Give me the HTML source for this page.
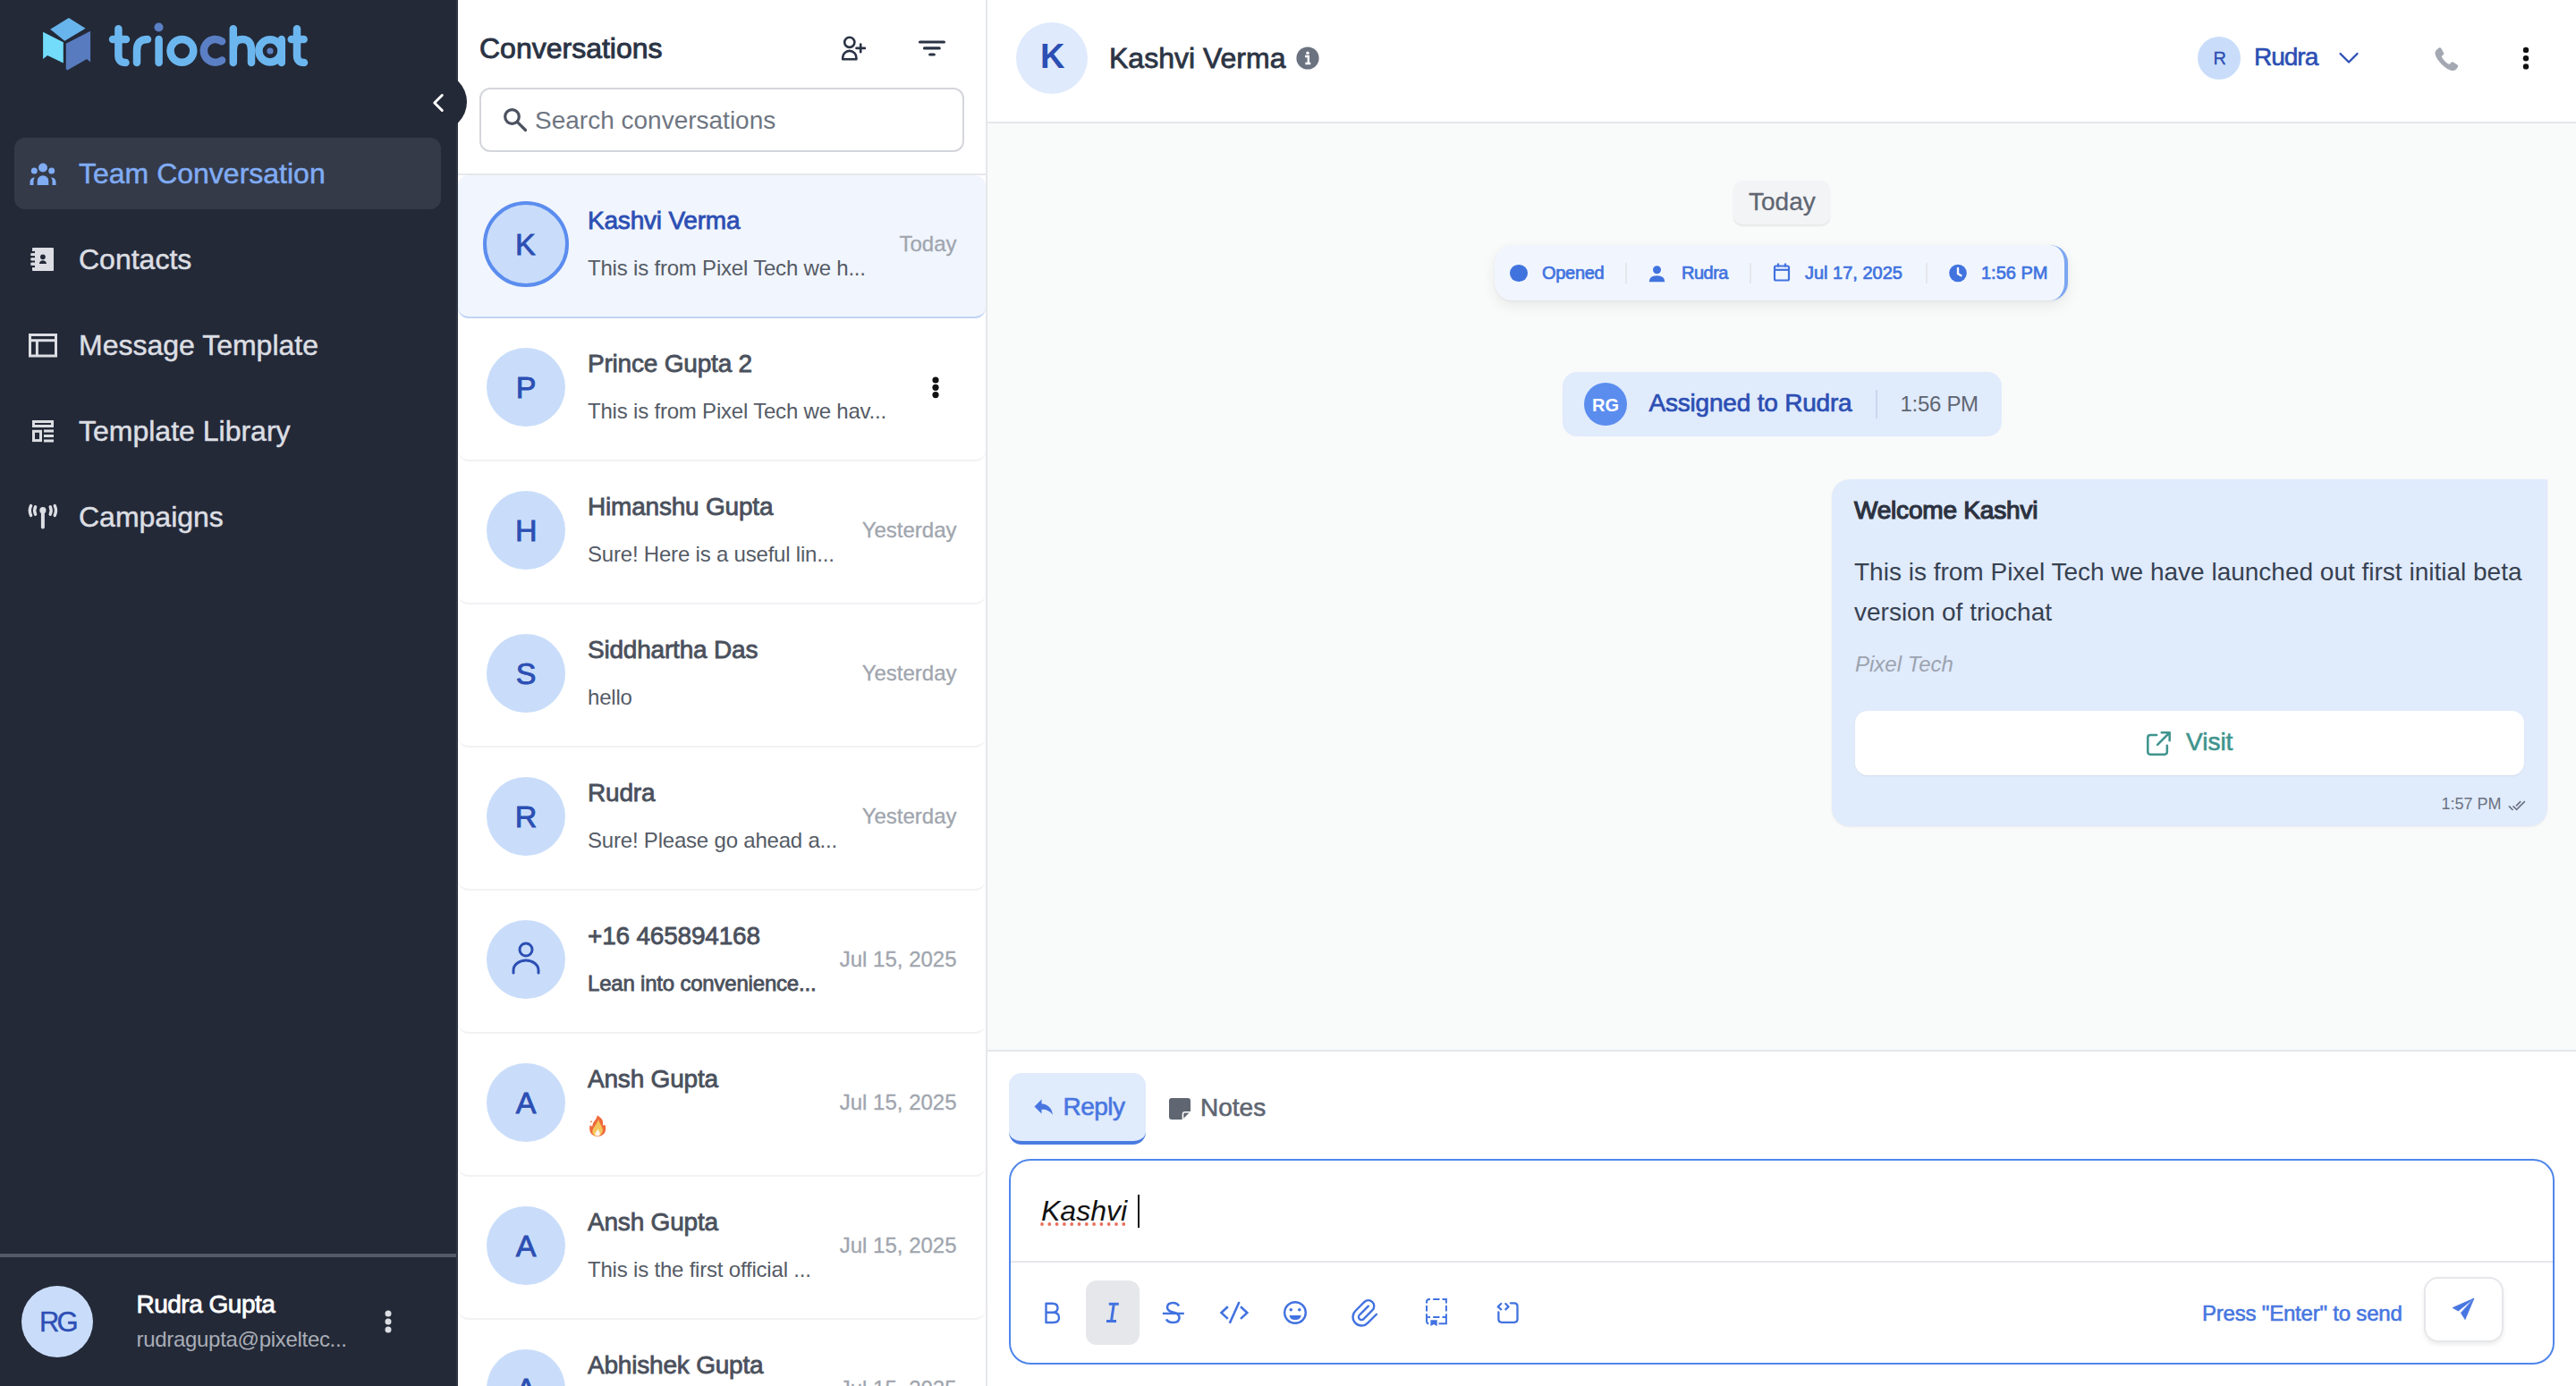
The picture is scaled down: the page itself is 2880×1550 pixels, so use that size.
<!DOCTYPE html>
<html><head><meta charset="utf-8"><title>triochat</title>
<style>
html,body{margin:0;padding:0;width:2880px;height:1550px;overflow:hidden;background:#fff;font-family:"Liberation Sans", sans-serif;}
.b{position:absolute;}
.t{position:absolute;white-space:nowrap;line-height:1;}
</style></head><body>
<div class="b" style="left:0px;top:0px;width:512px;height:1550px;background:#232937;"></div><div class="b" style="left:510px;top:0px;width:2px;height:1550px;background:#2f3644;"></div><svg class="b" style="left:40px;top:14px;" width="70" height="70" viewBox="0 0 70 70">
<polygon fill="#68b4ec" points="36.9,6.1 55.6,17.7 32.3,31.8 16.2,18.7"/>
<polygon fill="#72dcfa" points="8.1,21.7 30.8,33.3 30.8,56.6 13.1,48 8.1,52"/>
<polygon fill="#587bbf" points="33.8,34.8 61.1,20.7 61.1,55.6 57.1,52 35.4,64.6 33.8,63.6"/>
</svg><svg class="b" style="left:0px;top:0px;" width="400" height="100" viewBox="0 0 400 100">
<g fill="none" stroke="#6cb6ef" stroke-width="8.5" stroke-linecap="round" stroke-linejoin="round">
<path d="M132.4,32.3 V62 Q132.4,70 140.5,70"/>
<path d="M126,44 H141"/>
<path d="M153,70 V56 Q153,44 165,44"/>
<path d="M177.6,44 V70"/>
<circle cx="203.4" cy="56.8" r="12.9"/>
<path d="M260.8,32.3 V70 M260.8,56 Q260.8,44 271,44 Q281,44 281,56 V70"/>
<circle cx="302" cy="56.8" r="12.6"/>
<path d="M314.8,44 V70"/>
<path d="M332,32.3 V62 Q332,70 340,70"/>
<path d="M325.7,44 H339.7"/>
</g>
<path d="M248.1,46.2 A12.9,12.9 0 1 0 248.1,67.4" fill="none" stroke="#5b7fc4" stroke-width="8.5" stroke-linecap="round"/>
<circle cx="177.5" cy="30.5" r="5" fill="#5b7fc4"/>
<circle cx="302" cy="57" r="3.6" fill="#5b7fc4"/>
</svg><div class="b" style="left:16px;top:154px;width:477px;height:80px;background:#343a48;border-radius:12px;"></div><svg class="b" style="left:30px;top:178px;" width="36" height="34" viewBox="0 0 36 34"><g fill="#80acf4">
<circle cx="18" cy="9.5" r="5"/><circle cx="8.3" cy="12.9" r="3.5"/><circle cx="27.7" cy="12.9" r="3.5"/>
<path d="M11.7,29 V24.5 A6.3,6.3 0 0 1 24.3,24.5 V29 Z"/>
<path d="M3.5,29 V25.5 A5,5 0 0 1 8.8,20.5 Q7.5,22.5 7.5,25 V29 Z"/>
<path d="M32.5,29 V25.5 A5,5 0 0 0 27.2,20.5 Q28.5,22.5 28.5,25 V29 Z"/>
</g></svg><div class="t" style="left:88px;top:178.21px;font-size:32px;color:#80acf4;-webkit-text-stroke:0.5px #80acf4;">Team Conversation</div><svg class="b" style="left:30px;top:272px;" width="36" height="36" viewBox="0 0 36 36"><rect x="6" y="5" width="24" height="26" rx="1" fill="#dcdee3"/>
<g stroke="#232937" stroke-width="2.2"><path d="M3.5,10 H9"/><path d="M3.5,15.2 H9"/><path d="M3.5,20.5 H9"/><path d="M3.5,26 H9"/></g>
<g fill="#dcdee3"><rect x="4.3" y="11.2" width="3" height="2.8"/><rect x="4.3" y="16.4" width="3" height="2.9"/><rect x="4.3" y="21.7" width="3" height="3.1"/></g>
<circle cx="17.9" cy="15.3" r="2.9" fill="#232937"/>
<path d="M13.9,23 Q14.5,19.4 17.9,19.3 Q21.4,19.4 22,23 Z" fill="#232937"/></svg><div class="t" style="left:88px;top:274.21px;font-size:32px;color:#dcdee3;-webkit-text-stroke:0.5px #dcdee3;">Contacts</div><svg class="b" style="left:30px;top:370px;" width="36" height="32" viewBox="0 0 36 32"><g fill="none" stroke="#dcdee3" stroke-width="3"><rect x="3.5" y="4.5" width="29" height="23.5"/><path d="M3.5,10.7 H32.5"/><path d="M11.4,10.7 V28"/></g></svg><div class="t" style="left:88px;top:370.21px;font-size:32px;color:#dcdee3;-webkit-text-stroke:0.5px #dcdee3;">Message Template</div><svg class="b" style="left:30px;top:466px;" width="36" height="32" viewBox="0 0 36 32"><g fill="none" stroke="#dcdee3" stroke-width="3"><rect x="7.5" y="5.5" width="21" height="5"/><rect x="7.5" y="16.3" width="8" height="10.3"/></g>
<g fill="#dcdee3"><rect x="19" y="14.5" width="11" height="3"/><rect x="19" y="20" width="11" height="3"/><rect x="19" y="25.5" width="11" height="3"/></g></svg><div class="t" style="left:88px;top:466.21px;font-size:32px;color:#dcdee3;-webkit-text-stroke:0.5px #dcdee3;">Template Library</div><svg class="b" style="left:30px;top:560px;" width="36" height="36" viewBox="0 0 36 36"><g fill="#dcdee3"><circle cx="17.9" cy="10.7" r="3.6"/><rect x="15.9" y="11" width="4" height="20.5" rx="2"/></g>
<g fill="none" stroke="#dcdee3" stroke-width="3.4" stroke-linecap="round">
<path d="M4.6,5.5 Q2,11 4.6,16.5"/><path d="M9.6,6.8 Q7.6,11 9.6,15.2"/>
<path d="M31.2,5.5 Q33.8,11 31.2,16.5"/><path d="M26.2,6.8 Q28.2,11 26.2,15.2"/></g></svg><div class="t" style="left:88px;top:562.21px;font-size:32px;color:#dcdee3;-webkit-text-stroke:0.5px #dcdee3;">Campaigns</div><div class="b" style="left:0px;top:1402px;width:510px;height:4px;background:#545a67;"></div><div class="b" style="left:24px;top:1438px;width:80px;height:80px;background:#c9ddfa;border-radius:50%;"></div><div class="t" style="left:44px;top:1462.75px;font-size:31px;color:#2d4fb5;-webkit-text-stroke:0.4px #2d4fb5;letter-spacing:-3px;">RG</div><div class="t" style="left:152.5px;top:1445.29px;font-size:28px;color:#ffffff;-webkit-text-stroke:0.8px #ffffff;letter-spacing:-0.5px;">Rudra Gupta</div><div class="t" style="left:152.5px;top:1486.28px;font-size:24px;color:#a9adb6;letter-spacing:-0.3px;">rudragupta@pixeltec...</div><svg class="b" style="left:424px;top:1460px;" width="20" height="36" viewBox="0 0 20 36"><g fill="#dcdee3"><circle cx="10" cy="9" r="3.5"/><circle cx="10" cy="18" r="3.5"/><circle cx="10" cy="27" r="3.5"/></g></svg><div class="b" style="left:512px;top:0px;width:590px;height:1550px;background:#ffffff;"></div><div class="b" style="left:1102px;top:0px;width:2px;height:1550px;background:#e5e7eb;"></div><div class="t" style="left:536px;top:37.91px;font-size:32px;color:#2a3344;-webkit-text-stroke:0.9px #2a3344;">Conversations</div><svg class="b" style="left:936px;top:36px;" width="36" height="36" viewBox="0 0 36 36"><g fill="none" stroke="#2a3344" stroke-width="2.6" stroke-linecap="round">
<circle cx="13.8" cy="11.3" r="5.6"/><path d="M6.2,30.3 V28.5 A7.6,7.6 0 0 1 21.4,28.5 V30.3 Z" stroke-linejoin="round"/>
<path d="M21.5,17.9 H30.9 M26.2,13.5 V22.3"/></g></svg><svg class="b" style="left:1020px;top:36px;" width="44" height="32" viewBox="0 0 44 32"><g stroke="#2a3344" stroke-width="3.2" stroke-linecap="round">
<path d="M8.5,11 H35.4"/><path d="M13.5,17.9 H30.2"/><path d="M19.7,25 H24.3"/></g></svg><div class="b" style="left:536px;top:98px;width:542px;height:72px;border:2px solid #d4d6dc;border-radius:12px;box-sizing:border-box;background:#fff;"></div><svg class="b" style="left:556px;top:114px;" width="40" height="40" viewBox="0 0 40 40"><g fill="none" stroke="#4b5160" stroke-width="3.2" stroke-linecap="round"><circle cx="16.5" cy="16.5" r="7.8"/><path d="M22.3,22.3 L31.5,31.5"/></g></svg><div class="t" style="left:598px;top:120.79px;font-size:28px;color:#6f7682;">Search conversations</div><div class="b" style="left:512px;top:194px;width:590px;height:2px;background:#e5e7eb;"></div><div class="b" style="left:512px;top:196px;width:590px;height:160px;background:#f1f5fd;border-radius:12px;border-bottom:2px solid #bed3f6;box-sizing:border-box;"></div><div class="b" style="left:540px;top:225px;width:96px;height:96px;background:#c9ddfa;border:4px solid #5b8def;border-radius:50%;box-sizing:border-box;"></div><div class="t" style="left:576.0px;top:256.21px;font-size:34px;color:#2c4fb3;-webkit-text-stroke:0.9px #2c4fb3;">K</div><div class="t" style="left:657px;top:233.49px;font-size:28px;color:#2c4fb3;-webkit-text-stroke:0.8px #2c4fb3;letter-spacing:-0.2px;">Kashvi Verma</div><div class="t" style="left:657px;top:287.68px;font-size:24px;color:#555b66;letter-spacing:-0.2px;">This is from Pixel Tech we h...</div><div class="t" style="left:1005.46875px;top:261.08px;font-size:24px;color:#a0a5ae;-webkit-text-stroke:0.3px #a0a5ae;">Today</div><div class="b" style="left:512px;top:356px;width:590px;height:160px;background:#fff;border-radius:12px;border-bottom:2px solid #f1f2f4;box-sizing:border-box;"></div><div class="b" style="left:544px;top:389px;width:88px;height:88px;background:#c9ddfa;border-radius:50%;"></div><div class="t" style="left:576.65px;top:416.21px;font-size:34px;color:#2c4fb3;-webkit-text-stroke:0.9px #2c4fb3;">P</div><div class="t" style="left:657px;top:393.49px;font-size:28px;color:#4a505c;-webkit-text-stroke:0.8px #4a505c;letter-spacing:-0.2px;">Prince Gupta 2</div><div class="t" style="left:657px;top:447.68px;font-size:24px;color:#555b66;letter-spacing:-0.2px;">This is from Pixel Tech we hav...</div><svg class="b" style="left:1035px;top:411px;" width="22" height="44" viewBox="0 0 22 44"><g fill="#111"><circle cx="11" cy="14" r="3.6"/><circle cx="11" cy="22.3" r="3.6"/><circle cx="11" cy="30.6" r="3.6"/></g></svg><div class="b" style="left:512px;top:516px;width:590px;height:160px;background:#fff;border-radius:12px;border-bottom:2px solid #f1f2f4;box-sizing:border-box;"></div><div class="b" style="left:544px;top:549px;width:88px;height:88px;background:#c9ddfa;border-radius:50%;"></div><div class="t" style="left:576.0px;top:576.21px;font-size:34px;color:#2c4fb3;-webkit-text-stroke:0.9px #2c4fb3;">H</div><div class="t" style="left:657px;top:553.49px;font-size:28px;color:#4a505c;-webkit-text-stroke:0.8px #4a505c;letter-spacing:-0.2px;">Himanshu Gupta</div><div class="t" style="left:657px;top:607.68px;font-size:24px;color:#555b66;letter-spacing:-0.2px;">Sure! Here is a useful lin...</div><div class="t" style="left:963.640625px;top:581.08px;font-size:24px;color:#a0a5ae;-webkit-text-stroke:0.3px #a0a5ae;">Yesterday</div><div class="b" style="left:512px;top:676px;width:590px;height:160px;background:#fff;border-radius:12px;border-bottom:2px solid #f1f2f4;box-sizing:border-box;"></div><div class="b" style="left:544px;top:709px;width:88px;height:88px;background:#c9ddfa;border-radius:50%;"></div><div class="t" style="left:576.65px;top:736.21px;font-size:34px;color:#2c4fb3;-webkit-text-stroke:0.9px #2c4fb3;">S</div><div class="t" style="left:657px;top:713.49px;font-size:28px;color:#4a505c;-webkit-text-stroke:0.8px #4a505c;letter-spacing:-0.2px;">Siddhartha Das</div><div class="t" style="left:657px;top:767.68px;font-size:24px;color:#555b66;letter-spacing:-0.2px;">hello</div><div class="t" style="left:963.640625px;top:741.08px;font-size:24px;color:#a0a5ae;-webkit-text-stroke:0.3px #a0a5ae;">Yesterday</div><div class="b" style="left:512px;top:836px;width:590px;height:160px;background:#fff;border-radius:12px;border-bottom:2px solid #f1f2f4;box-sizing:border-box;"></div><div class="b" style="left:544px;top:869px;width:88px;height:88px;background:#c9ddfa;border-radius:50%;"></div><div class="t" style="left:575.75px;top:896.21px;font-size:34px;color:#2c4fb3;-webkit-text-stroke:0.9px #2c4fb3;">R</div><div class="t" style="left:657px;top:873.49px;font-size:28px;color:#4a505c;-webkit-text-stroke:0.8px #4a505c;letter-spacing:-0.2px;">Rudra</div><div class="t" style="left:657px;top:927.68px;font-size:24px;color:#555b66;letter-spacing:-0.2px;">Sure! Please go ahead a...</div><div class="t" style="left:963.640625px;top:901.08px;font-size:24px;color:#a0a5ae;-webkit-text-stroke:0.3px #a0a5ae;">Yesterday</div><div class="b" style="left:512px;top:996px;width:590px;height:160px;background:#fff;border-radius:12px;border-bottom:2px solid #f1f2f4;box-sizing:border-box;"></div><div class="b" style="left:544px;top:1029px;width:88px;height:88px;background:#c9ddfa;border-radius:50%;"></div><svg class="b" style="left:568px;top:1051px;" width="40" height="44" viewBox="0 0 40 44"><g fill="none" stroke="#2c4fb3" stroke-width="3" stroke-linecap="round"><circle cx="20" cy="11" r="7"/><path d="M6,37 V34 A14,11 0 0 1 34,34 V37"/></g></svg><div class="t" style="left:657px;top:1033.49px;font-size:28px;color:#4a505c;-webkit-text-stroke:0.8px #4a505c;letter-spacing:-0.2px;">+16 465894168</div><div class="t" style="left:657px;top:1087.68px;font-size:24px;color:#4a505c;-webkit-text-stroke:0.8px #4a505c;letter-spacing:-0.2px;">Lean into convenience...</div><div class="t" style="left:938.75px;top:1061.08px;font-size:24px;color:#a0a5ae;-webkit-text-stroke:0.3px #a0a5ae;">Jul 15, 2025</div><div class="b" style="left:512px;top:1156px;width:590px;height:160px;background:#fff;border-radius:12px;border-bottom:2px solid #f1f2f4;box-sizing:border-box;"></div><div class="b" style="left:544px;top:1189px;width:88px;height:88px;background:#c9ddfa;border-radius:50%;"></div><div class="t" style="left:576.65px;top:1216.21px;font-size:34px;color:#2c4fb3;-webkit-text-stroke:0.9px #2c4fb3;">A</div><div class="t" style="left:657px;top:1193.49px;font-size:28px;color:#4a505c;-webkit-text-stroke:0.8px #4a505c;letter-spacing:-0.2px;">Ansh Gupta</div><svg class="b" style="left:656px;top:1244px;" width="24" height="28" viewBox="0 0 24 28"><path d="M11.9,3.2 C14.5,5 17.5,7 18,10 L18,14.5 C19.5,14 20.6,14 20.8,14.5 C21.3,16.5 21.3,18.5 21,20 C20.5,24 16.5,26.9 11.9,26.9 C7,26.9 3.5,23.5 3.2,19 C3,17 3.3,15 4.1,13.9 C4.8,14.8 5.4,15.5 6.1,15.9 C6.5,13 7.5,11 9,9.3 C10,8.3 11,6 11.9,3.2 Z" fill="#ef6a3c"/><circle cx="5" cy="10.4" r="0.9" fill="#ef6a3c"/><path d="M13.3,8.1 C13.5,11 16,14 17.7,18.5 C18.5,22 16,26.6 11.3,26.6 C8,26.6 6,24 6.4,20.5 C7,17.5 9,16 10.5,13 C11.5,11.5 12.5,10 13.3,8.1 Z" fill="#f5c65b"/><path d="M12.5,18.5 C13.5,20.5 14.8,22.5 14.8,24.3 C14.8,25.8 13.5,26.3 12.2,26.3 C10.8,26.3 9.3,25.7 9.3,24.2 C9.5,22 11.8,20.8 12.5,18.5 Z" fill="#fff5ee"/></svg><div class="t" style="left:938.75px;top:1221.08px;font-size:24px;color:#a0a5ae;-webkit-text-stroke:0.3px #a0a5ae;">Jul 15, 2025</div><div class="b" style="left:512px;top:1316px;width:590px;height:160px;background:#fff;border-radius:12px;border-bottom:2px solid #f1f2f4;box-sizing:border-box;"></div><div class="b" style="left:544px;top:1349px;width:88px;height:88px;background:#c9ddfa;border-radius:50%;"></div><div class="t" style="left:576.65px;top:1376.21px;font-size:34px;color:#2c4fb3;-webkit-text-stroke:0.9px #2c4fb3;">A</div><div class="t" style="left:657px;top:1353.49px;font-size:28px;color:#4a505c;-webkit-text-stroke:0.8px #4a505c;letter-spacing:-0.2px;">Ansh Gupta</div><div class="t" style="left:657px;top:1407.68px;font-size:24px;color:#555b66;letter-spacing:-0.2px;">This is the first official ...</div><div class="t" style="left:938.75px;top:1381.08px;font-size:24px;color:#a0a5ae;-webkit-text-stroke:0.3px #a0a5ae;">Jul 15, 2025</div><div class="b" style="left:512px;top:1476px;width:590px;height:160px;background:#fff;border-radius:12px;border-bottom:2px solid #f1f2f4;box-sizing:border-box;"></div><div class="b" style="left:544px;top:1509px;width:88px;height:88px;background:#c9ddfa;border-radius:50%;"></div><div class="t" style="left:576.65px;top:1536.21px;font-size:34px;color:#2c4fb3;-webkit-text-stroke:0.9px #2c4fb3;">A</div><div class="t" style="left:657px;top:1513.49px;font-size:28px;color:#4a505c;-webkit-text-stroke:0.8px #4a505c;letter-spacing:-0.2px;">Abhishek Gupta</div><div class="t" style="left:938.75px;top:1541.08px;font-size:24px;color:#a0a5ae;-webkit-text-stroke:0.3px #a0a5ae;">Jul 15, 2025</div><div class="b" style="left:457.5px;top:81.5px;width:64.5px;height:64.5px;background:#232937;border-radius:50%;"></div><svg class="b" style="left:470px;top:94px;" width="40" height="40" viewBox="0 0 40 40"><path d="M24.3,12.5 L15.8,21 L24.3,29.5" fill="none" stroke="#fff" stroke-width="3" stroke-linecap="round" stroke-linejoin="round"/></svg><div class="b" style="left:1104px;top:0px;width:1776px;height:136px;background:#fff;"></div><div class="b" style="left:1104px;top:136px;width:1776px;height:2px;background:#e5e7eb;"></div><div class="b" style="left:1136px;top:25px;width:80px;height:80px;background:#dfeafc;border-radius:50%;"></div><div class="t" style="left:1163px;top:44.13px;font-size:40px;color:#2c4fb3;font-weight:700;font-size:38px;">K</div><div class="t" style="left:1240px;top:49.31px;font-size:32px;color:#2c3444;-webkit-text-stroke:0.8px #2c3444;">Kashvi Verma</div><svg class="b" style="left:1449px;top:52px;" width="26" height="26" viewBox="0 0 26 26"><circle cx="13" cy="13" r="12.6" fill="#6b7280"/><path d="M10,11 H13.8 V19 M10.3,19 H16.3" fill="none" stroke="#fff" stroke-width="2.4"/><circle cx="13" cy="7.2" r="1.8" fill="#fff"/></svg><div class="b" style="left:2457px;top:41px;width:48px;height:48px;background:#c9ddfa;border-radius:50%;"></div><div class="t" style="left:2474.5px;top:55.17px;font-size:20px;color:#2c4fb3;-webkit-text-stroke:0.3px #2c4fb3;">R</div><div class="t" style="left:2520px;top:50.49px;font-size:28px;color:#2c4fb3;-webkit-text-stroke:0.6px #2c4fb3;letter-spacing:-1px;">Rudra</div><svg class="b" style="left:2612px;top:55px;" width="28" height="20" viewBox="0 0 28 20"><path d="M4.5,5 L14,14.5 L23.5,5" fill="none" stroke="#2c4fb3" stroke-width="2.3" stroke-linecap="round" stroke-linejoin="round"/></svg><svg class="b" style="left:2718.5px;top:50.5px;" width="32" height="32" viewBox="0 0 32 32"><path d="M6.6,3.5 C5,4.5 3,6.5 3.5,9.5 C4.8,16 15,26.5 22,28 C25,28.6 27,26.8 28.2,25 L29,23.6 C29.4,22.8 29.2,22 28.4,21.5 L23.6,18.6 C22.8,18.1 21.8,18.3 21.2,19 L19.5,21 C16,19.5 12,15.5 10.6,12 L12.6,10.3 C13.3,9.7 13.5,8.7 13,7.9 L10.2,3 C9.6,2.2 8.7,2 7.9,2.6 Z" fill="#a3a8b3"/></svg><svg class="b" style="left:2812px;top:48px;" width="24" height="36" viewBox="0 0 24 36"><g fill="#111"><circle cx="12" cy="7.9" r="3.2"/><circle cx="12" cy="17.2" r="3.2"/><circle cx="12" cy="26.4" r="3.2"/></g></svg><div class="b" style="left:1104px;top:138px;width:1776px;height:1036px;background:#f9fafa;"></div><div class="b" style="left:1938px;top:202px;width:108px;height:49px;background:#f3f4f6;border-radius:10px;box-shadow:0 2px 2px rgba(0,0,0,0.08);"></div><div class="t" style="left:1955px;top:211.79px;font-size:28px;color:#5f6672;-webkit-text-stroke:0.3px #5f6672;">Today</div><div class="b" style="left:1671px;top:274px;width:641px;height:62px;background:#f1f6fe;border-radius:20px;border-right:4px solid #7ba6f0;box-sizing:border-box;box-shadow:0 6px 16px rgba(0,0,0,0.07), 0 1px 3px rgba(0,0,0,0.05);"></div><div class="b" style="left:1688px;top:295.5px;width:19.5px;height:19.5px;background:#4173df;border-radius:50%;"></div><div class="t" style="left:1724px;top:295.07px;font-size:20px;color:#4173df;-webkit-text-stroke:0.7px #4173df;letter-spacing:-0.3px;">Opened</div><div class="b" style="left:1817px;top:294px;width:2px;height:23px;background:#e5e7eb;"></div><svg class="b" style="left:1840px;top:294px;" width="24" height="24" viewBox="0 0 24 24"><g fill="#4173df"><circle cx="12.5" cy="7.8" r="4.5"/><path d="M3.7,21.3 Q3.7,14.2 12.5,14.2 Q21.3,14.2 21.3,21.3 Z"/></g></svg><div class="t" style="left:1880px;top:295.07px;font-size:20px;color:#4173df;-webkit-text-stroke:0.7px #4173df;letter-spacing:-0.5px;">Rudra</div><div class="b" style="left:1956px;top:294px;width:2px;height:23px;background:#e5e7eb;"></div><svg class="b" style="left:1980px;top:292px;" width="24" height="24" viewBox="0 0 24 24"><g fill="none" stroke="#4173df" stroke-width="2.2"><rect x="4" y="5.5" width="16" height="16" rx="1.5"/><path d="M4,9.8 H20"/><path d="M8,2.5 V6.5 M16,2.5 V6.5"/></g></svg><div class="t" style="left:2018px;top:295.07px;font-size:20px;color:#4173df;-webkit-text-stroke:0.7px #4173df;">Jul 17, 2025</div><div class="b" style="left:2153px;top:294px;width:2px;height:23px;background:#e5e7eb;"></div><svg class="b" style="left:2178px;top:295px;" width="22" height="22" viewBox="0 0 22 22"><circle cx="11" cy="10.5" r="9.8" fill="#4173df"/><path d="M11,5 V11 L14.5,13.2" fill="none" stroke="#f5f8fe" stroke-width="2.4" stroke-linecap="round"/></svg><div class="t" style="left:2215px;top:295.07px;font-size:20px;color:#4173df;-webkit-text-stroke:0.7px #4173df;">1:56 PM</div><div class="b" style="left:1747px;top:416px;width:491px;height:72px;background:#e0ebfc;border-radius:16px;"></div><div class="b" style="left:1771px;top:428px;width:48px;height:48px;background:#5b8def;border-radius:50%;"></div><div class="t" style="left:1780px;top:443.07px;font-size:20px;color:#ffffff;font-weight:700;">RG</div><div class="t" style="left:1843.5px;top:437.29px;font-size:28px;color:#2c4fb3;-webkit-text-stroke:0.7px #2c4fb3;letter-spacing:-0.2px;">Assigned to Rudra</div><div class="b" style="left:2097px;top:436px;width:2px;height:32px;background:#c9d7ee;"></div><div class="t" style="left:2124.5px;top:440.28px;font-size:24px;color:#5f6672;letter-spacing:-0.3px;">1:56 PM</div><div class="b" style="left:2048px;top:536px;width:800px;height:388px;background:#e0ebfc;border-radius:20px 0 20px 20px;box-shadow:0 1px 3px rgba(0,0,0,0.06);"></div><div class="t" style="left:2073px;top:556.69px;font-size:28px;color:#2c3240;-webkit-text-stroke:1.2px #2c3240;letter-spacing:-0.2px;">Welcome Kashvi</div><div class="t" style="left:2073px;top:625.99px;font-size:28px;color:#374151;">This is from Pixel Tech we have launched out first initial beta</div><div class="t" style="left:2073px;top:671.19px;font-size:28px;color:#374151;">version of triochat</div><div class="t" style="left:2074px;top:730.68px;font-size:24px;color:#9ca3af;font-style:italic;">Pixel Tech</div><div class="b" style="left:2074px;top:795px;width:748px;height:72px;background:#fff;border-radius:14px;box-shadow:0 1px 2px rgba(0,0,0,0.06);"></div><svg class="b" style="left:2397.5px;top:816px;" width="30" height="30" viewBox="0 0 32 32"><g fill="none" stroke="#3f948e" stroke-width="2.7" stroke-linecap="round" stroke-linejoin="round"><path d="M14,6.5 H6.5 Q3.5,6.5 3.5,9.5 V26.5 Q3.5,29.5 6.5,29.5 H23.5 Q26.5,29.5 26.5,26.5 V19"/><path d="M15,18 L29,4 M20,3.5 H29.5 V13"/></g></svg><div class="t" style="left:2444px;top:816.39px;font-size:28px;color:#3f948e;-webkit-text-stroke:0.6px #3f948e;">Visit</div><div class="t" style="left:2729.5px;top:890.26px;font-size:18px;color:#6b7280;">1:57 PM</div><svg class="b" style="left:2803.7px;top:891.2px;" width="20" height="16" viewBox="0 0 24.4 19.5"><path d="M18 7l-1.41-1.41-6.34 6.34 1.41 1.41L18 7zm4.24-1.41L11.66 16.17 7.48 12l-1.41 1.41L11.66 19l12-12-1.42-1.41zM.41 13.41L6 19l1.41-1.41L1.83 12 .41 13.41z" fill="#6b7280"/></svg><div class="b" style="left:1104px;top:1174px;width:1776px;height:2px;background:#e5e7eb;"></div><div class="b" style="left:1104px;top:1176px;width:1776px;height:374px;background:#fff;"></div><div class="b" style="left:1128px;top:1200px;width:153px;height:80px;background:#e0ebfc;border-radius:14px;border-bottom:4px solid #4a7be0;box-sizing:border-box;"></div><svg class="b" style="left:1154px;top:1226px;" width="26" height="24" viewBox="0 0 26 24"><path d="M10.5,3.5 L2.5,11.5 L10.5,19.5 V14.8 C16,14.6 19.5,16.3 23,20.8 C22.3,14 18,9 10.5,8.2 Z" fill="#4776e0"/></svg><div class="t" style="left:1188.5px;top:1224.09px;font-size:28px;color:#4776e0;-webkit-text-stroke:0.6px #4776e0;letter-spacing:-0.5px;">Reply</div><svg class="b" style="left:1305px;top:1226px;" width="28" height="28" viewBox="0 0 28 28"><path d="M5,2 H23 Q26,2 26,5 V17 L17,26 H5 Q2,26 2,23 V5 Q2,2 5,2 Z" fill="#5f6672"/><path d="M17.5,26.5 V20 Q17.5,17.8 19.7,17.8 H26.3" fill="none" stroke="#fff" stroke-width="1.6"/></svg><div class="t" style="left:1342px;top:1225.29px;font-size:28px;color:#5f6672;-webkit-text-stroke:0.6px #5f6672;">Notes</div><div class="b" style="left:1128px;top:1296px;width:1728px;height:230px;border:2px solid #4f86ea;border-radius:24px;box-sizing:border-box;"></div><div class="t" style="left:1164px;top:1337.81px;font-size:32px;color:#111111;font-style:italic;">Kashvi</div><svg class="b" style="left:1162px;top:1366px;" width="100" height="6" viewBox="0 0 100 6"><g fill="#e8705c"><circle cx="3.0" cy="3" r="1.9"/><circle cx="11.3" cy="3" r="1.9"/><circle cx="19.6" cy="3" r="1.9"/><circle cx="27.9" cy="3" r="1.9"/><circle cx="36.2" cy="3" r="1.9"/><circle cx="44.5" cy="3" r="1.9"/><circle cx="52.8" cy="3" r="1.9"/><circle cx="61.1" cy="3" r="1.9"/><circle cx="69.4" cy="3" r="1.9"/><circle cx="77.7" cy="3" r="1.9"/><circle cx="86.0" cy="3" r="1.9"/><circle cx="94.3" cy="3" r="1.9"/></g></svg><div class="b" style="left:1272px;top:1336px;width:2px;height:37px;background:#111;"></div><div class="b" style="left:1130px;top:1410px;width:1724px;height:2px;background:#e5e7eb;"></div><svg class="b" style="left:1160px;top:1450px;" width="32" height="36" viewBox="0 0 32 36"><path d="M9.5,7.8 H16.5 Q22.5,7.8 22.5,12.8 Q22.5,17.5 17,17.8 Q24,18 24,23.5 Q24,29 17.5,29 H9.5 Z M9.5,17.8 H17" fill="none" stroke="#4272e0" stroke-width="2.4" stroke-linejoin="round"/></svg><div class="b" style="left:1214px;top:1432px;width:60px;height:72px;background:#e5e7eb;border-radius:12px;"></div><svg class="b" style="left:1230px;top:1450px;" width="28" height="36" viewBox="0 0 28 36"><g fill="none" stroke="#4272e0" stroke-width="3"><path d="M9.8,8.3 H20.8"/><path d="M7,27.5 H18"/><path d="M15.3,8.3 L12.5,27.5"/></g></svg><svg class="b" style="left:1296px;top:1450px;" width="32" height="36" viewBox="0 0 32 36"><path d="M22,10.5 Q20,7 15.5,7 Q9,7 9,12 Q9,16 15.5,17.5 Q22.5,19 22.5,23.5 Q22.5,29 15.5,29 Q10,29 8,25.3" fill="none" stroke="#4272e0" stroke-width="2.6"/><path d="M3.9,18.9 H27.8" stroke="#4272e0" stroke-width="2.4"/></svg><svg class="b" style="left:1360px;top:1450px;" width="40" height="36" viewBox="0 0 40 36"><g fill="none" stroke="#4272e0" stroke-width="2.6" stroke-linejoin="miter"><path d="M12.8,11.3 L5.5,18.1 L12.8,24.9"/><path d="M27,11.3 L34.3,18.1 L27,24.9"/><path d="M25.5,6 L14.8,29.7"/></g></svg><svg class="b" style="left:1432px;top:1453px;" width="32" height="32" viewBox="0 0 32 32"><circle cx="16" cy="15" r="11.8" fill="none" stroke="#4272e0" stroke-width="2.4"/><circle cx="11.3" cy="11.7" r="1.8" fill="#4272e0"/><circle cx="20.8" cy="11.7" r="1.8" fill="#4272e0"/><path d="M9.5,17.9 H22.7 Q22,23.1 16.1,23.1 Q10.2,23.1 9.5,17.9 Z" fill="#4272e0"/></svg><svg class="b" style="left:1506.5px;top:1449.7px;" width="36.5" height="36.5" viewBox="0 0 24 24"><path d="M15 7l-6.5 6.5a1.5 1.5 0 0 0 3 3l6.5 -6.5a3 3 0 0 0 -6 -6l-6.5 6.5a4.5 4.5 0 0 0 9 9l6.5 -6.5" fill="none" stroke="#4272e0" stroke-width="1.55" stroke-linecap="round" stroke-linejoin="round"/></svg><svg class="b" style="left:1585px;top:1445px;" width="120" height="45" viewBox="0 0 120 45"><g fill="none" stroke="#4272e0" stroke-width="2"><path d="M10,12.6 V10.9 Q10,7.9 13,7.9 H14 M17.2,7.9 H24.5 M27.5,7.9 H31.9 V12.6 M10,14.9 V21.4 M31.9,14.9 V21.4 M10,24.2 V32.2 Q10,34.7 12.3,35.5 M31.9,24.2 V35.2 H23.5 M11.2,27.9 H14 M17.2,27.9 H24.5 M27.5,27.9 H31"/></g><path d="M14.4,31.2 H21.7 V38 L18,35.9 L14.4,38 Z" fill="#4272e0"/><g fill="none" stroke="#4272e0" stroke-width="2.3" stroke-linecap="round" stroke-linejoin="round"><path d="M93.2,13 L89.7,16.3 L93.2,19.3 M98.3,13 L101.5,16.3 L98.3,19.3"/><path d="M90.4,22.4 V30.3 Q90.4,33.8 93.9,33.8 H108 Q111.5,33.8 111.5,30.3 V15.8 Q111.5,12.3 108,12.3 H103.9"/></g></svg><div class="t" style="left:2462px;top:1456.58px;font-size:24px;color:#4776e0;-webkit-text-stroke:0.6px #4776e0;letter-spacing:-0.2px;">Press "Enter" to send</div><div class="b" style="left:2709.5px;top:1427.5px;width:89px;height:73px;background:#fff;border:2px solid #e6e7ea;border-radius:16px;box-sizing:border-box;box-shadow:0 3px 5px rgba(0,0,0,0.07);"></div><svg class="b" style="left:2736px;top:1448px;" width="32" height="32" viewBox="0 0 32 32"><g fill="#4776e0" stroke="#4776e0" stroke-width="0.8" stroke-linejoin="round"><path d="M29.9,4.1 L6.1,14.5 L12.4,18 Z"/><path d="M29.9,4.1 L15.4,20.2 L20,27.6 Z"/></g></svg>
</body></html>
